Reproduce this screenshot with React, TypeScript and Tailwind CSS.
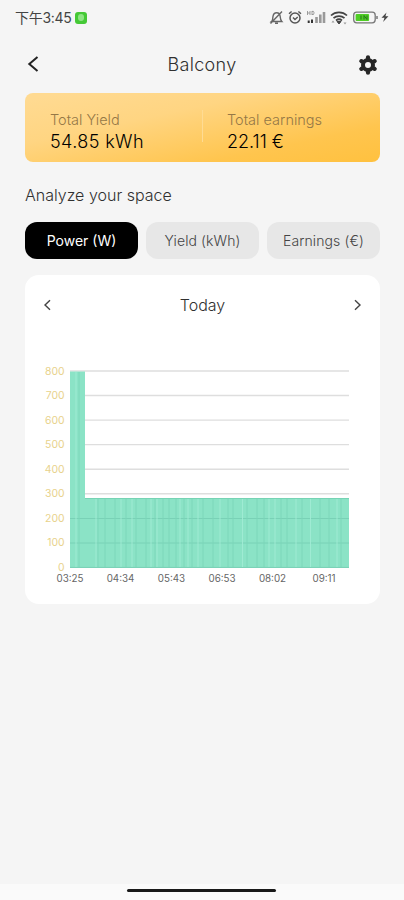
import React, { useState } from "react";

const tabs = ["Power (W)", "Yield (kWh)", "Earnings (€)"];

const yLabels = [800, 700, 600, 500, 400, 300, 200, 100, 0];

const xLabels = [
  { label: "03:25", x: 45 },
  { label: "04:34", x: 95.5 },
  { label: "05:43", x: 146.5 },
  { label: "06:53", x: 197 },
  { label: "08:02", x: 247.5 },
  { label: "09:11", x: 299 },
];

// Light and dark seams between neighbouring bars
const lightSeams = [51, 71, 96, 107, 126, 132, 155, 163, 173, 195, 217.5, 244, 250, 271, 285.5, 312];
const darkSeams = [
  54, 73, 80, 90, 101, 111, 121, 130, 138, 144, 151, 159, 167, 178, 188, 203,
  208, 222, 232, 239, 256, 262, 277, 295, 304, 316,
];

const StatusIcons = () => (
  <svg width="122" height="20" viewBox="268 8 122 20" fill="none" stroke="#444" strokeWidth="1.2">
    {/* Muted bell */}
    <path
      d="M271.5 21.5c1.600-1.200 1-3 1.500-5.200.4-2.300 1.800-3.600 3.600-3.600 2.200 0 3.400 1.800 3.600 3.800.2 2.300.2 3.600 1.600 5H271.500ZM275 23.300h3M270.500 23.500l11.500-12"
      stroke="#666"
      strokeWidth="1.400"
    />
    {/* Alarm */}
    <circle cx="295" cy="18" r="5" strokeWidth="1.5" stroke="#555" />
    <path d="m293 17.500 2 2 2.700-2.500M289 13.800l2.600-2.400M301 13.800l-2.600-2.400" strokeWidth="1.400" stroke="#555" />
    {/* Signal */}
    <path d="M307.500 11v4M310 11v4M307.500 13h2.500M312 11v4M312 11.400h1.500l.6 1.500-.6 1.600H312" strokeWidth=".8" stroke="#888" />
    <path d="M308.700 20.500V23M312 19.500V23" strokeWidth="2" stroke="#333" />
    <path d="M316.500 17v6M320.300 14.500V23M324 12v11" strokeWidth="2.600" stroke="#999" />
    {/* Wifi */}
    <path d="M331 15.500c4.500-4.200 11.500-4.200 16 0M333.500 18.200c3-2.800 8-2.800 11 0M336 20.500c1.800-1.500 4.200-1.500 6 0" strokeWidth="1.700" />
    <path d="m337 21.500 2 2.500 2-2.500Z" fill="#444" strokeWidth="1" />
    <path d="m331.500 22.500 1.500-2 1.500 2ZM343.500 22.500l1.500 2 1.500-2Z" fill="#999" stroke="none" />
    {/* Battery */}
    <rect x="353.700" y="12.200" width="21.500" height="10.600" rx="3" stroke="#777" strokeWidth="1.300" />
    <rect x="355.600" y="14" width="13.500" height="7" rx="1" fill="#4fce24" stroke="none" />
    <path d="M361 19.500v-4M364 15.500v4M364 15.500l3 4M367 19.500v-4" stroke="#27751a" strokeWidth="1" />
    <path d="M377 16v3" stroke="#777" strokeWidth="1.500" />
    <path d="m386.500 12.500-5 5.300h3l-1.400 4.300 5.300-5.800h-3Z" fill="#444" stroke="none" />
  </svg>
);

const Gear = () => (
  <svg width="20" height="20" viewBox="0 0 20 20" fill="none" stroke="#262626">
    <circle cx="10" cy="10" r="5" strokeWidth="4" />
    <path
      d="M10 3v-.7M10 17v.7M3.900 6.500l-.6-.4M16.100 13.500l.6.4M3.900 13.500l-.6.4M16.100 6.500l.6-.4"
      strokeWidth="4.200"
      strokeLinecap="round"
    />
  </svg>
);

const PowerChart = () => (
  <svg
    width="355"
    height="264"
    viewBox="0 0 355 264"
    className="block font-['Inter',sans-serif] font-light"
  >
    {yLabels.map((value, i) => (
      <g key={value}>
        <line x1="45" x2="324" y1={31 + i * 24.55} y2={31 + i * 24.55} stroke="#dedede" strokeWidth="1.4" />
        <text x="39.500" y={34.600 + i * 24.5} textAnchor="end" fontSize="10.400" fontWeight="400" fill="#e8d28c">
          {value}
        </text>
      </g>
    ))}
    <path d="M45 31.500h15V158h264v70H45Z" fill="#8be3c6" />
    {[178.500, 203, 227.400].map((y) => (
      <line key={y} x1="45" x2="324" y1={y} y2={y} stroke="#79d1b6" />
    ))}
    {darkSeams.map((x) => (
      <line key={x} x1={x} x2={x} y1={x < 60 ? 32 : 159} y2="227" stroke="#7cd6b9" strokeWidth=".9" />
    ))}
    {lightSeams.map((x) => (
      <line key={x} x1={x} x2={x} y1={x < 60 ? 32 : 159} y2="227" stroke="#a2ecd5" strokeWidth=".9" />
    ))}
    <path d="M60 158.500h264" stroke="#76d3b4" strokeWidth="1" />
    {xLabels.map((tick) => (
      <text key={tick.label} x={tick.x} y="242" textAnchor="middle" fontSize="9.800" fontWeight="400" fill="#666">
        {tick.label}
      </text>
    ))}
  </svg>
);

const App = () => {
  const [activeTab, setActiveTab] = useState(0);

  return (
    <div className="h-[900px] w-[404px] overflow-hidden bg-[#f5f5f5] flex flex-col font-['Inter','Noto_Sans_CJK_SC',sans-serif] text-[#303030]">
      {/* Status bar */}
      <div className="h-9 shrink-0 flex items-center justify-between pl-[15px] pr-[14px]">
        <div className="flex items-center gap-1 pb-px">
          <span className="w-[56px] whitespace-nowrap text-[14px] tracking-[-0.3px] text-[#444]">下午3:45</span>
          <span className="flex h-3 w-3 items-center justify-center rounded-[3px] bg-[#45c936]">
            <span className="h-[7px] w-[6px] rounded-full bg-[#8ee584]" />
          </span>
        </div>
        <StatusIcons />
      </div>

      {/* Header */}
      <header className="h-[57px] shrink-0 flex items-center justify-between pl-[25px] pr-[26px]">
        <button aria-label="Back" className="w-5 pb-px">
          <svg width="17" height="20" viewBox="0 0 17 20" fill="none" stroke="#222" strokeWidth="2">
            <path d="m12.500 3-8.200 7 8.200 7" />
          </svg>
        </button>
        <h1 className="pl-px text-[18px] font-light tracking-[0.3px]">Balcony</h1>
        <button aria-label="Settings">
          <Gear />
        </button>
      </header>

      <main className="px-[25px] pr-6">
        {/* Totals */}
        <section className="h-[69px] w-[355px] rounded-lg bg-[linear-gradient(168deg,#ffda91_5%,#ffd582_35%,#ffc54e_75%,#ffc13f_100%)] flex pt-[17px]">
          <div className="w-[177px] pl-[25px]">
            <p className="h-[21px] whitespace-nowrap text-[14.500px] leading-[20px] font-light text-[#957847]">Total Yield</p>
            <p className="whitespace-nowrap text-[18px] leading-[22px] font-light tracking-[0.4px] text-black">54.85 kWh</p>
          </div>
          <div className="h-[32px] w-px bg-[#ffdb93]" />
          <div className="pl-6">
            <p className="h-[21px] whitespace-nowrap text-[14.500px] leading-[20px] font-light text-[#957847]">Total earnings</p>
            <p className="whitespace-nowrap text-[18px] leading-[22px] font-light text-black">22.11 €</p>
          </div>
        </section>

        <h2 className="mt-[21px] h-[39px] text-[16px] leading-6 font-light">Analyze your space</h2>

        {/* Tabs */}
        <div className="flex w-[355px] gap-2">
          {tabs.map((tab, i) => (
            <button
              key={tab}
              onClick={() => setActiveTab(i)}
              className={`h-[37px] flex-1 whitespace-nowrap rounded-[12px] text-[14px] ${
                i === activeTab ? "bg-black font-normal text-white" : "bg-[#e7e7e7] font-light tracking-[0.1px] text-[#444]"
              }`}
            >
              {tab}
            </button>
          ))}
        </div>

        {/* Chart card */}
        <section className="mt-4 h-[329px] w-[355px] rounded-[14px] bg-white">
          <div className="flex h-[65px] items-center justify-between px-[18px] pb-[5px]">
            <button aria-label="Previous day">
              <svg width="9" height="14" viewBox="0 0 9 14" fill="none" stroke="#444" strokeWidth="1.400">
                <path d="m7 2.200-5 4.800 5 4.800" />
              </svg>
            </button>
            <span className="text-[16px] font-light">Today</span>
            <button aria-label="Next day">
              <svg width="9" height="14" viewBox="0 0 9 14" fill="none" stroke="#444" strokeWidth="1.400">
                <path d="m2 2.200 5 4.800-5 4.800" />
              </svg>
            </button>
          </div>
          <PowerChart />
        </section>
      </main>

      {/* Home indicator */}
      <div className="mt-auto flex h-4 justify-center bg-[#fafafa] pt-[5px] pr-[2px]">
        <div className="h-[3px] w-[149px] rounded-full bg-[#191919]" />
      </div>
    </div>
  );
};

export default App;
